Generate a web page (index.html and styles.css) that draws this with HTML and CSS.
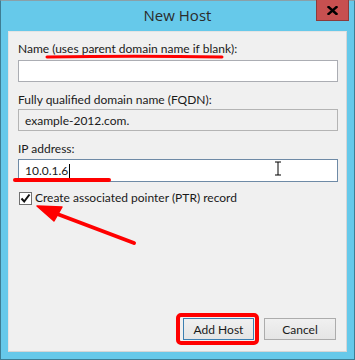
FILE: index.html
```html
<!DOCTYPE html>
<html lang="en">
<head>
    <meta charset="UTF-8">
    <title>New Host</title>
    <link rel="stylesheet" href="styles.css">
</head>
<body>
    <div class="window">
        <div class="titlebar">
            <span class="title">New Host</span>
            <button class="close-btn" aria-label="Close">
                <svg width="11" height="9" viewBox="0 0 11 9">
                    <path d="M1.5 1 L9.5 8 M9.5 1 L1.5 8" stroke="#000" stroke-width="2.4" stroke-linecap="square"/>
                </svg>
            </button>
        </div>

        <div class="client">
            <div class="field-label label-name">Name (uses parent domain name if blank):</div>
            <div class="textbox textbox-name"></div>

            <div class="field-label label-fqdn">Fully qualified domain name (FQDN):</div>
            <div class="textbox textbox-readonly">example-2012.com.</div>

            <div class="field-label label-ip">IP address:</div>
            <div class="textbox textbox-focused">10.0.1.6<span class="caret"></span></div>

            <label class="check-row">
                <span class="checkbox">
                    <svg width="11" height="11" viewBox="0 0 11 11">
                        <path d="M1.5 5.5 L4.2 8.5 L9.5 1.5" fill="none" stroke="#111" stroke-width="2"/>
                    </svg>
                </span>
                Create associated pointer (PTR) record
            </label>

            <div class="button-row">
                <button class="dlg-btn default-btn">Add Host</button>
                <button class="dlg-btn">Cancel</button>
            </div>
        </div>

        <!-- red annotations drawn over the dialog -->
        <svg class="annotations" width="355" height="360" viewBox="0 0 355 360">
            <path d="M47 57 Q135 55.5 222 57" fill="none" stroke="#f00" stroke-width="3" stroke-linecap="round"/>
            <path d="M15 180 L109 180" fill="none" stroke="#f00" stroke-width="4" stroke-linecap="round"/>
            <path d="M134 243 L52 212" fill="none" stroke="#f00" stroke-width="4" stroke-linecap="round"/>
            <path d="M37 206 L62 207 L54 221 Z" fill="#f00" stroke="#f00" stroke-width="1.5" stroke-linejoin="round"/>
            <rect x="178" y="315" width="79" height="28" rx="3" fill="none" stroke="#f00" stroke-width="4"/>
            <path d="M275 162 H281 M278 162 V175 M275 175 H281" fill="none" stroke="#fff" stroke-width="3"/>
            <path d="M275 162 H281 M278 162 V175 M275 175 H281" fill="none" stroke="#000" stroke-width="1"/>
        </svg>
    </div>
</body>
</html>
```

FILE: styles.css
```css
* {
    margin: 0;
    padding: 0;
    box-sizing: border-box;
}

body {
    width: 355px;
    height: 360px;
    overflow: hidden;
    font-family: Lato, "Open Sans", sans-serif;
    font-size: 12px;
    color: #1a1a1a;
}

.window {
    position: relative;
    width: 355px;
    height: 360px;
    display: flex;
    flex-direction: column;
    padding: 0 7px 7px 7px;
    background-color: #66c9ea;
    border: 1px solid #3e7d93;
    border-top-color: #8aa0a8;
}

.titlebar {
    height: 30px;
    display: flex;
    align-items: center;
    justify-content: center;
    padding-bottom: 2px;
}

.title {
    font-family: "Open Sans", sans-serif;
    font-size: 15px;
    color: #2b2b2b;
}

.close-btn {
    position: absolute;
    top: -1px;
    right: 5px;
    width: 33px;
    height: 21px;
    display: flex;
    align-items: center;
    justify-content: center;
    background-color: #c75050;
    border: 1px solid #8c3b3b;
    border-top: none;
}

.client {
    flex: 1;
    display: flex;
    flex-direction: column;
    padding: 9px 8px 11px 9px;
    background-color: #f0f0f0;
    border: 1px solid #e4e4e4;
    border-right-color: #d6d6d6;
    border-bottom-color: #d6d6d6;
}

.field-label {
    line-height: 16px;
    white-space: nowrap;
}

.label-fqdn,
.label-ip {
    margin-top: 10px;
}

.textbox {
    height: 22px;
    display: flex;
    align-items: center;
    padding-left: 6px;
    background-color: #fff;
    border: 1px solid #abadb3;
}

.textbox-name {
    margin-top: 3px;
}

.textbox-readonly {
    margin-top: 1px;
    background-color: #f0f0f0;
    border-color: #b4b4b4;
}

.textbox-focused {
    margin-top: 2px;
    height: 23px;
    border-color: #6e8aa6;
}

.caret {
    width: 1px;
    height: 14px;
    margin-left: 1px;
    background-color: #000;
}

.check-row {
    display: flex;
    align-items: center;
    gap: 3px;
    margin-top: 9px;
    margin-left: 1px;
    line-height: 14px;
}

.checkbox {
    width: 13px;
    height: 13px;
    display: flex;
    align-items: center;
    justify-content: center;
    background-color: #fff;
    border: 1px solid #707070;
}

.button-row {
    margin-top: auto;
    display: flex;
    justify-content: flex-end;
    gap: 10px;
    padding-right: 2px;
}

.dlg-btn {
    width: 72px;
    height: 22px;
    font-family: inherit;
    font-size: 12px;
    color: #1a1a1a;
    background: linear-gradient(#f0f0f0, #e5e5e5);
    border: 1px solid #acacac;
}

.default-btn {
    width: 71px;
    border-color: #3c7fb1;
}

.annotations {
    position: absolute;
    top: -1px;
    left: -1px;
    pointer-events: none;
}
```
